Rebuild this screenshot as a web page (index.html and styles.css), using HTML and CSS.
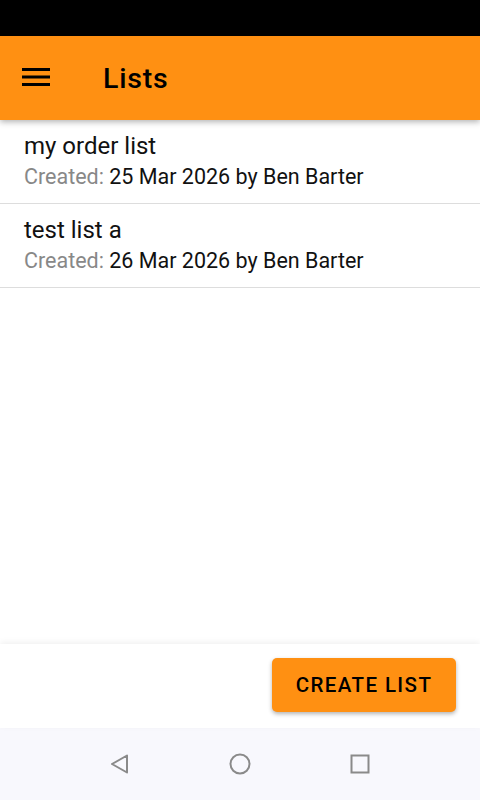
FILE: index.html
```html
<!DOCTYPE html>
<html lang="en">
<head>
    <meta charset="UTF-8">
    <meta name="viewport" content="width=device-width, initial-scale=1.0">
    <title>Lists</title>
    <link rel="stylesheet" href="styles.css">
</head>
<body>

<div class="screen">
    <div class="status-bar"></div>

    <!-- Top app bar -->
    <div class="app-bar">
        <button class="menu-btn" aria-label="Menu">
            <svg width="28" height="18" viewBox="0 0 28 18">
                <rect x="0" y="0" width="28" height="3" fill="#000"/>
                <rect x="0" y="7.5" width="28" height="3" fill="#000"/>
                <rect x="0" y="15" width="28" height="3" fill="#000"/>
            </svg>
        </button>
        <h1>Lists</h1>
    </div>

    <!-- Lists -->
    <div class="list">
        <div class="list-item">
            <div class="item-title">my order list</div>
            <div class="item-meta"><span class="label">Created:</span> 25 Mar 2026 by Ben Barter</div>
        </div>
        <div class="list-item">
            <div class="item-title">test list a</div>
            <div class="item-meta"><span class="label">Created:</span> 26 Mar 2026 by Ben Barter</div>
        </div>
    </div>

    <!-- Bottom action -->
    <div class="footer">
        <button class="create-btn">Create List</button>
    </div>

    <!-- System navigation -->
    <div class="nav-bar">
        <svg width="24" height="24" viewBox="0 0 24 24">
            <path d="M19 3.5 L4 12 L19 20.5 Z" fill="none" stroke="#8a8a8a" stroke-width="2" stroke-linejoin="round"/>
        </svg>
        <svg width="24" height="24" viewBox="0 0 24 24">
            <circle cx="12" cy="12" r="9.5" fill="none" stroke="#8a8a8a" stroke-width="2"/>
        </svg>
        <svg width="24" height="24" viewBox="0 0 24 24">
            <rect x="3.5" y="3.5" width="17" height="17" fill="none" stroke="#8a8a8a" stroke-width="2"/>
        </svg>
    </div>
</div>

</body>
</html>
```

FILE: styles.css
```css
body {
    margin: 0;
    font-family: Roboto, "Noto Sans", Arial, sans-serif;
    background-color: #fff;
}
.screen {
    width: 480px;
    height: 800px;
    display: flex;
    flex-direction: column;
    overflow: hidden;
}
.status-bar {
    height: 36px;
    background-color: #000;
    flex-shrink: 0;
}
.app-bar {
    height: 84px;
    background-color: #ff9012;
    display: flex;
    align-items: center;
    padding-left: 22px;
    box-shadow: 0 2px 6px rgba(0, 0, 0, 0.3);
    position: relative;
    z-index: 2;
    flex-shrink: 0;
}
.menu-btn {
    background: none;
    border: none;
    padding: 0;
    width: 28px;
    height: 18px;
    display: flex;
    margin-top: -2px;
}
.app-bar h1 {
    margin: 0 0 0 53px;
    font-size: 28.5px;
    font-weight: 500;
    color: #000;
    letter-spacing: 0.8px;
}
.list {
    flex: 1;
}
.list-item {
    height: 84px;
    padding: 11px 24px 0;
    box-sizing: border-box;
    border-bottom: 1px solid #ddd;
}
.item-title {
    font-size: 24px;
    color: #111;
    line-height: 30px;
}
.item-meta {
    font-size: 21.5px;
    color: #111;
    line-height: 30px;
    margin-top: 1px;
}
.label {
    color: #888;
}
.footer {
    height: 84px;
    display: flex;
    justify-content: flex-end;
    align-items: center;
    padding-right: 24px;
    box-shadow: 0 -2px 6px rgba(0, 0, 0, 0.06);
    position: relative;
    flex-shrink: 0;
}
.create-btn {
    width: 184px;
    height: 54px;
    background-color: #ff9012;
    color: #000;
    border: none;
    border-radius: 5px;
    font-family: Roboto, "Noto Sans", Arial, sans-serif;
    font-size: 20.5px;
    font-weight: 500;
    letter-spacing: 1.4px;
    text-transform: uppercase;
    box-shadow: 0 2px 4px rgba(0, 0, 0, 0.3);
    margin-top: -2px;
}
.nav-bar {
    height: 72px;
    background-color: #f8f8fd;
    display: flex;
    justify-content: center;
    align-items: center;
    gap: 96px;
    flex-shrink: 0;
}
```
